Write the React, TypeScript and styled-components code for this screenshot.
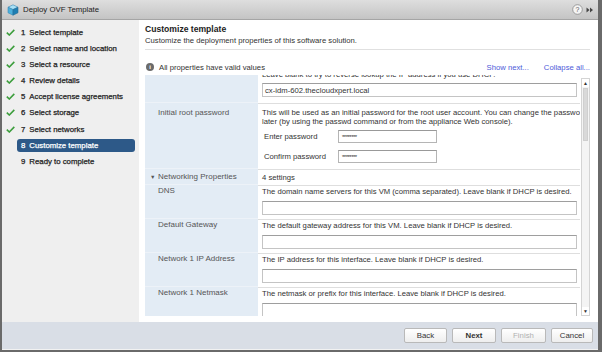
import React from 'react';
import styled, { createGlobalStyle } from 'styled-components';

const GlobalStyle = createGlobalStyle`
  html, body {
    margin: 0;
    padding: 0;
    background: #ffffff;
  }
  body {
    font-family: "Liberation Sans", Arial, sans-serif;
    font-size: 7.7px;
    color: #333;
  }
  * {
    box-sizing: border-box;
  }
`;

const Window = styled.div`
  width: 602px;
  height: 352px;
  display: flex;
  flex-direction: column;
  border-left: 2px solid #6a6a6a;
  border-right: 4px solid #6a6a6a;
  border-bottom: 2px solid #6a6a6a;
  background: #fff;
  overflow: hidden;
`;

const TitleBar = styled.div`
  height: 20px;
  flex: none;
  display: flex;
  align-items: center;
  padding: 0 4px 0 5px;
  background: linear-gradient(#dedede, #c4c4c4);
  border-bottom: 1px solid #a5a5a5;
`;

const TitleText = styled.span`
  margin-left: 4px;
  font-size: 7.8px;
  color: #222;
  flex: 1;
`;

const TitleTools = styled.div`
  display: flex;
  align-items: center;
  gap: 3px;
`;

const Body = styled.div`
  flex: 1;
  display: flex;
  min-height: 0;
`;

const Nav = styled.nav`
  width: 137px;
  flex: none;
  background: #efefef;
  padding-top: 4.2px;
`;

const NavItem = styled.div`
  height: 16.15px;
  display: flex;
  align-items: center;
  padding-left: 4px;
`;

const CheckSlot = styled.span`
  width: 11px;
  display: flex;
  align-items: center;
`;

const NavLabel = styled.span<{ $active?: boolean }>`
  flex: 1;
  margin-right: 4px;
  height: 13px;
  display: flex;
  align-items: center;
  padding-left: 4px;
  border-radius: 3px;
  font-size: 7.8px;
  color: ${(p) => (p.$active ? '#fff' : '#222')};
  background: ${(p) => (p.$active ? '#2d5988' : 'transparent')};
  -webkit-text-stroke: 0.25px ${(p) => (p.$active ? '#fff' : '#222')};
  white-space: nowrap;

  b {
    font-weight: normal;
    margin-right: 4px;
  }
`;

const Content = styled.div`
  flex: 1;
  min-width: 0;
  display: flex;
  flex-direction: column;
  padding: 4px 8px 6px 6px;
`;

const Heading = styled.div`
  font-weight: bold;
  font-size: 8.6px;
  color: #222;
  line-height: 10px;
`;

const Subtitle = styled.div`
  margin-top: 2px;
  line-height: 10px;
  color: #333;
  padding-bottom: 3px;
  border-bottom: 1px solid #e0e0e0;
`;

const InfoRow = styled.div`
  margin-top: 12px;
  height: 10px;
  display: flex;
  align-items: center;
  color: #333;
`;

const InfoIcon = styled.span`
  width: 8px;
  height: 8px;
  border-radius: 50%;
  background: #6b6b6b;
  color: #fff;
  font-size: 6px;
  font-weight: bold;
  display: flex;
  align-items: center;
  justify-content: center;
  margin: 0 5px 0 1px;
`;

const Spacer = styled.span`
  flex: 1;
`;

const Link = styled.a`
  color: #4d5ad9;
  text-decoration: none;
  margin-left: 15px;
`;

const TableArea = styled.div`
  margin-top: 3px;
  height: 241px;
  display: flex;
  gap: 1px;
`;

const Viewport = styled.div`
  flex: 1;
  min-width: 0;
  overflow: hidden;
`;

const Row = styled.div<{ $first?: boolean }>`
  display: grid;
  grid-template-columns: 113px minmax(0, 1fr);
  margin-top: ${(p) => (p.$first ? '-10px' : '0')};
`;

const LabelCell = styled.div<{ $padTop?: number }>`
  background: #e3ecf5;
  color: #555;
  font-size: 8px;
  padding: ${(p) => p.$padTop ?? 1}px 0 0 13px;
  line-height: 10px;
  border-bottom: 1px solid #edf2f8;
`;

const GroupLabel = styled(LabelCell)`
  padding-left: 5px;
  display: flex;
  align-items: center;

  i {
    font-style: normal;
    font-size: 5.5px;
    width: 8px;
  }
`;

const ValueCell = styled.div<{ $padTop?: number; $padBottom?: number }>`
  overflow: hidden;
  padding: ${(p) => p.$padTop ?? 1}px 3px ${(p) => p.$padBottom ?? 4}px 4px;
  border-top: 1px solid #dedede;
  white-space: nowrap;
  color: #333;
`;

const Desc = styled.div<{ $lh?: number }>`
  line-height: ${(p) => p.$lh ?? 10}px;
`;

const TextInput = styled.div<{ $mt?: number }>`
  height: 14px;
  margin-top: ${(p) => p.$mt ?? 4}px;
  border: 1px solid #c4c4c4;
  border-top-color: #9e9e9e;
  background: #fff;
  padding-left: 2px;
  display: flex;
  align-items: center;
  color: #333;
`;

const PasswordRow = styled.div<{ $mt: number }>`
  margin-top: ${(p) => p.$mt}px;
  display: flex;
  align-items: center;
  height: 13px;
`;

const PasswordLabel = styled.span`
  width: 76px;
  padding-left: 2px;
`;

const PasswordBox = styled.div`
  width: 99px;
  height: 13px;
  border: 1px solid #b5b5b5;
  border-top-color: #999;
  padding-left: 3px;
  font-size: 6px;
  letter-spacing: -0.5px;
  display: flex;
  align-items: center;
`;

const Scrollbar = styled.div`
  width: 9px;
  margin-top: 3px;
  border: 1px solid #d4d4d4;
  background: #f4f4f4;
  display: flex;
  flex-direction: column;
`;

const ScrollArrow = styled.div`
  height: 8px;
  background: #fff;
  display: flex;
  align-items: center;
  justify-content: center;
  font-size: 5px;
  color: #333;
`;

const ScrollThumb = styled.div`
  height: 53px;
  margin: 1px 1px 0;
  background: #d9d9d9;
  border: 1px solid #cfcfcf;
`;

const Footer = styled.div`
  height: 28px;
  flex: none;
  background: #d9dee6;
  border-bottom: 1px solid #f2f2f2;
  display: flex;
  align-items: center;
  justify-content: flex-end;
  gap: 5px;
  padding-right: 5px;
`;

const Button = styled.button<{ $primary?: boolean; $w: number }>`
  width: ${(p) => p.$w}px;
  height: 15px;
  padding: 0;
  border: 1px solid #b9b9b9;
  border-radius: 2px;
  background: linear-gradient(#ffffff, #eeeeee);
  font-family: "Liberation Sans", Arial, sans-serif;
  font-size: 7.8px;
  font-weight: ${(p) => (p.$primary ? 'bold' : 'normal')};
  color: ${(p) => (p.disabled ? '#b0b0b0' : '#333')};
`;

const Check = () => (
  <svg width="9" height="7" viewBox="0 0 9 7">
    <path d="M0.8 3.6 L3.3 6 L8.3 0.9" fill="none" stroke="#3d9e3d" strokeWidth="1.6" />
  </svg>
);

const Cube = () => (
  <svg width="12" height="12" viewBox="0 0 12 12">
    <path d="M6 0.8 L11 3.2 L6 5.6 L1 3.2 Z" fill="#a9e1f6" stroke="#3a88b5" strokeWidth="0.6" />
    <path d="M1 3.2 L6 5.6 L6 11.2 L1 8.8 Z" fill="#4bb0dc" stroke="#3a88b5" strokeWidth="0.6" />
    <path d="M11 3.2 L6 5.6 L6 11.2 L11 8.8 Z" fill="#1d7eb3" stroke="#2a6d95" strokeWidth="0.6" />
  </svg>
);

const HelpIcon = () => (
  <svg width="11" height="11" viewBox="0 0 11 11">
    <circle cx="5.5" cy="5.5" r="4.8" fill="#f4f4f4" stroke="#8a8a8a" strokeWidth="0.8" />
    <text x="5.5" y="8" textAnchor="middle" fontSize="7" fontFamily="Liberation Sans, Arial" fill="#555">?</text>
  </svg>
);

const ExpandIcon = () => (
  <svg width="8" height="6" viewBox="0 0 8 6">
    <path d="M0.5 0.5 L3.5 3 L0.5 5.5 Z M4 0.5 L7 3 L4 5.5 Z" fill="#444" />
  </svg>
);

const steps = [
  'Select template',
  'Select name and location',
  'Select a resource',
  'Review details',
  'Accept license agreements',
  'Select storage',
  'Select networks',
  'Customize template',
  'Ready to complete',
];

const networkRows = [
  { label: 'DNS', desc: 'The domain name servers for this VM (comma separated). Leave blank if DHCP is desired.' },
  { label: 'Default Gateway', desc: 'The default gateway address for this VM. Leave blank if DHCP is desired.' },
  { label: 'Network 1 IP Address', desc: 'The IP address for this interface. Leave blank if DHCP is desired.' },
  { label: 'Network 1 Netmask', desc: 'The netmask or prefix for this interface. Leave blank if DHCP is desired.' },
];

function App() {
  return (
    <>
      <GlobalStyle />
      <Window>
        <TitleBar>
          <Cube />
          <TitleText>Deploy OVF Template</TitleText>
          <TitleTools>
            <HelpIcon />
            <ExpandIcon />
          </TitleTools>
        </TitleBar>
        <Body>
          <Nav>
            {steps.map((s, i) => (
              <NavItem key={s}>
                <CheckSlot>{i < 7 && <Check />}</CheckSlot>
                <NavLabel $active={i === 7}>
                  <b>{i + 1}</b>
                  {s}
                </NavLabel>
              </NavItem>
            ))}
          </Nav>
          <Content>
            <Heading>Customize template</Heading>
            <Subtitle>Customize the deployment properties of this software solution.</Subtitle>
            <InfoRow>
              <InfoIcon>i</InfoIcon>
              All properties have valid values
              <Spacer />
              <Link>Show next...</Link>
              <Link>Collapse all...</Link>
            </InfoRow>
            <TableArea>
              <Viewport>
                <Row $first>
                  <LabelCell />
                  <ValueCell $padTop={4} $padBottom={6}>
                    <Desc>Leave blank to try to reverse lookup the IP address if you use DHCP.</Desc>
                    <TextInput $mt={3}>cx-idm-602.thecloudxpert.local</TextInput>
                  </ValueCell>
                </Row>
                <Row>
                  <LabelCell $padTop={5}>Initial root password</LabelCell>
                  <ValueCell $padTop={4} $padBottom={6}>
                    <Desc $lh={9}>
                      This will be used as an initial password for the root user account. You can change the password
                      <br />
                      later (by using the passwd command or from the appliance Web console).
                    </Desc>
                    <PasswordRow $mt={4}>
                      <PasswordLabel>Enter password</PasswordLabel>
                      <PasswordBox>********</PasswordBox>
                    </PasswordRow>
                    <PasswordRow $mt={7}>
                      <PasswordLabel>Confirm password</PasswordLabel>
                      <PasswordBox>********</PasswordBox>
                    </PasswordRow>
                  </ValueCell>
                </Row>
                <Row>
                  <GroupLabel $padTop={0}>
                    <i>▼</i>Networking Properties
                  </GroupLabel>
                  <ValueCell $padTop={3} $padBottom={2}>
                    <Desc>4 settings</Desc>
                  </ValueCell>
                </Row>
                {networkRows.map((r) => (
                  <Row key={r.label}>
                    <LabelCell $padTop={1}>{r.label}</LabelCell>
                    <ValueCell $padTop={1} $padBottom={4}>
                      <Desc>{r.desc}</Desc>
                      <TextInput />
                    </ValueCell>
                  </Row>
                ))}
              </Viewport>
              <Scrollbar>
                <ScrollArrow>▲</ScrollArrow>
                <ScrollThumb />
                <Spacer />
                <ScrollArrow>▼</ScrollArrow>
              </Scrollbar>
            </TableArea>
          </Content>
        </Body>
        <Footer>
          <Button $w={43}>Back</Button>
          <Button $w={44} $primary>Next</Button>
          <Button $w={45} disabled>Finish</Button>
          <Button $w={42}>Cancel</Button>
        </Footer>
      </Window>
    </>
  );
}

export default App;
